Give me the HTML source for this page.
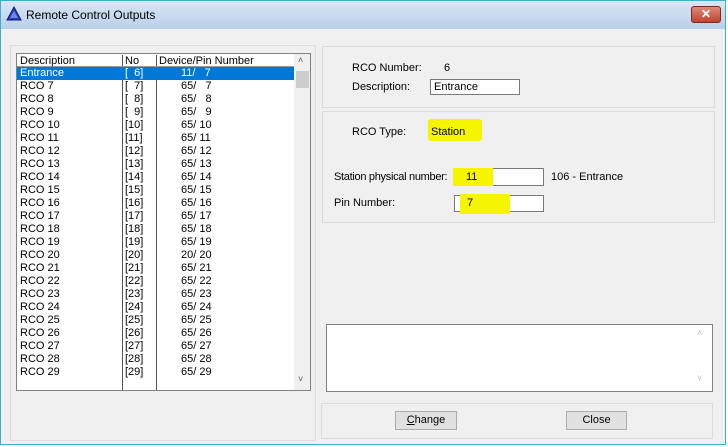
<!DOCTYPE html><html><head><style>
body{margin:0;width:728px;height:447px;overflow:hidden;background:#fff;font-family:"Liberation Sans",sans-serif;font-size:11px;color:#000;position:relative}
.a{position:absolute;white-space:nowrap}
.win{left:0;top:0;width:726px;height:445px;background:#f0f0f0;border:1px solid #3ab0d0;box-sizing:border-box}
.title{left:1px;top:1px;width:724px;height:28px;background:linear-gradient(#d9e6f5,#b9d0ea)}
.grp{border:1px solid #dcdcdc;box-sizing:border-box}
.box{background:#fff;border:1px solid #7a7a7a;box-sizing:border-box}
.btn{background:#e1e1e1;border:1px solid #adadad;box-sizing:border-box;text-align:center;line-height:17px}
.hl{background:#f5f500}
</style></head><body>
<div class="a win"></div>
<div class="a title"></div>
<svg class="a" style="left:6px;top:6px" width="16" height="15"><polygon points="8,1 15,14 1,14" fill="#2a3fbf" stroke="#0a1a70"/><polygon points="8,5 12,12 4,12" fill="#6f86e8"/></svg>
<div class="a" style="left:26px;top:8px;font-size:12px">Remote Control Outputs</div>
<div class="a" style="left:691px;top:6px;width:30px;height:17px;background:linear-gradient(#dc8a7a,#c0432e);border:1px solid #7a2a20;border-radius:3px;box-sizing:border-box;color:#fff;text-align:center;font-weight:bold;font-size:12px;line-height:15px">✕</div>
<div class="a grp" style="left:10px;top:45px;width:306px;height:396px"></div>
<div class="a box" style="left:16px;top:53px;width:295px;height:338px;border-color:#828282"></div>
<div class="a" style="left:122px;top:55px;width:1px;height:335px;background:#555"></div>
<div class="a" style="left:156px;top:55px;width:1px;height:335px;background:#555"></div>
<div class="a" style="left:17px;top:66px;width:277px;height:1px;background:#999"></div>
<div class="a" style="left:294px;top:54px;width:16px;height:336px;background:#f0f0f0"></div>
<div class="a" style="left:296px;top:71px;width:13px;height:17px;background:#cdcdcd"></div>
<div class="a" style="left:298px;top:55px;font-size:9px;color:#555">˄</div>
<div class="a" style="left:298px;top:374px;font-size:9px;color:#555">˅</div>
<div class="a" style="left:20px;top:55px">Description</div>
<div class="a" style="left:125px;top:55px">No</div>
<div class="a" style="left:159px;top:55px">Device/Pin Number</div>
<div class="a" style="left:17px;top:67px;width:277px;height:13px;background:#0078d7"></div>
<div class="a" id="rows" style="left:0;top:67px"></div>
<script>
var h='';var data=[['Entrance',6,11,7]];for(var i=7;i<=29;i++)data.push(['RCO '+i,i,i==20?20:65,i]);
data.forEach(function(d,k){var c=k==0?'color:#fff;':'';var y=k*13;
var n=d[1]<10?'[&nbsp; '+d[1]+']':'['+d[1]+']';var p=d[3]<10?'&nbsp; '+d[3]:d[3];
h+='<div class="a" style="'+c+'left:20px;top:'+y+'px">'+d[0]+'</div><div class="a" style="'+c+'left:125px;top:'+y+'px">'+n+'</div><div class="a" style="'+c+'left:181px;top:'+y+'px">'+d[2]+'/ '+p+'</div>';});
document.getElementById('rows').innerHTML=h;
</script>
<div class="a grp" style="left:322px;top:46px;width:393px;height:62px"></div>
<div class="a" style="left:352px;top:62px">RCO Number:</div>
<div class="a" style="left:444px;top:62px">6</div>
<div class="a" style="left:352px;top:81px">Description:</div>
<div class="a box" style="left:430px;top:79px;width:90px;height:16px;padding:1px 0 0 3px">Entrance</div>
<div class="a grp" style="left:322px;top:111px;width:393px;height:112px"></div>
<div class="a" style="left:352px;top:126px">RCO Type:</div>
<div class="a hl" style="left:428px;top:119px;width:54px;height:22px;border-radius:3px"></div>
<div class="a" style="left:431px;top:126px">Station</div>
<div class="a" style="left:334px;top:171px;letter-spacing:-0.3px">Station physical number:</div>
<div class="a box" style="left:453px;top:168px;width:91px;height:18px"></div>
<div class="a hl" style="left:453px;top:168px;width:40px;height:18px"></div>
<div class="a" style="left:466px;top:171px">11</div>
<div class="a" style="left:551px;top:171px">106 - Entrance</div>
<div class="a" style="left:334px;top:197px">Pin Number:</div>
<div class="a box" style="left:454px;top:195px;width:90px;height:17px"></div>
<div class="a hl" style="left:460px;top:194px;width:50px;height:20px"></div>
<div class="a" style="left:467px;top:197px">7</div>
<div class="a box" style="left:326px;top:324px;width:387px;height:68px;border-color:#828282"></div>
<div class="a" style="left:697px;top:328px;font-size:9px;color:#bbb">˄</div>
<div class="a" style="left:697px;top:373px;font-size:9px;color:#bbb">˅</div>
<div class="a grp" style="left:321px;top:403px;width:392px;height:36px"></div>
<div class="a btn" style="left:395px;top:411px;width:62px;height:19px"><u>C</u>hange</div>
<div class="a btn" style="left:566px;top:411px;width:61px;height:19px">Close</div>
</body></html>
